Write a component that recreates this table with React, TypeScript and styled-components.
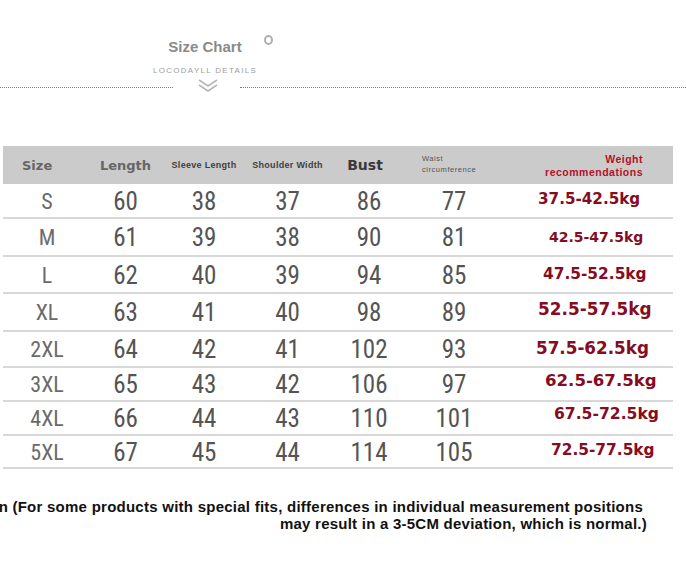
import React from "react";
import styled, { createGlobalStyle } from "styled-components";

const GlobalStyle = createGlobalStyle`
  html, body {
    margin: 0;
    padding: 0;
    background: #fff;
  }
`;

const Page = styled.div`
  position: relative;
  width: 686px;
  height: 580px;
  overflow: hidden;
  background: #fff;
  font-family: "Liberation Sans", Arial, sans-serif;
`;

const TitleBlock = styled.div`
  width: 410px;
  padding-top: 38px;
  display: flex;
  flex-direction: column;
  align-items: center;
`;

const Title = styled.div`
  position: relative;
  font-size: 15px;
  line-height: 18px;
  font-weight: 700;
  color: #8a8a8a;
`;

const Ring = styled.span`
  position: absolute;
  right: -31px;
  top: -3px;
  width: 5px;
  height: 6px;
  border: 2px solid #b0b0b0;
  border-radius: 50%;
`;

const Subtitle = styled.div`
  margin-top: 10px;
  font-size: 8px;
  line-height: 10px;
  letter-spacing: 1.3px;
  color: #9e9e9e;
`;

const Divider = styled.div`
  display: flex;
  align-items: flex-start;
  height: 14px;
  margin-top: 3px;
`;

const Dots = styled.div<{ $w: number }>`
  width: ${({ $w }) => $w}px;
  margin-top: 8px;
  border-top: 1px dotted #7a7a7a;
`;

const Chevron = styled.svg`
  margin: 0 21px 0 24px;
  flex-shrink: 0;
`;

const Table = styled.div`
  margin: 53px 0 0 3px;
  width: 670px;
`;

const HeadRow = styled.div`
  display: grid;
  grid-template-columns: 85px 75px 82px 85px 78px 92px 1fr;
  align-items: center;
  height: 38px;
  background: #cbcbcb;
`;

const HeadCell = styled.div<{ $align?: string; $pad?: string }>`
  text-align: ${({ $align }) => $align || "center"};
  padding: ${({ $pad }) => $pad || "0"};
  font-family: "DejaVu Sans", Verdana, sans-serif;
  font-weight: 700;
  font-size: 13px;
  color: #666;
  white-space: nowrap;
`;

const BustHead = styled(HeadCell)`
  font-size: 14px;
  color: #3a3a3a;
  padding-right: 8px;
`;

const SmallHead = styled.div`
  text-align: center;
  font-family: "Liberation Sans", Arial, sans-serif;
  font-weight: 700;
  font-size: 9px;
  letter-spacing: 0.3px;
  color: #3f3f3f;
  white-space: nowrap;
`;

const WaistHead = styled.div`
  padding-left: 14px;
  margin-top: -2px;
  font-family: "Liberation Sans", Arial, sans-serif;
  font-size: 7.5px;
  line-height: 11px;
  letter-spacing: 0.55px;
  color: #555;
`;

const WeightHead = styled.div`
  text-align: right;
  padding-right: 30px;
  margin-top: 2px;
  font-family: "Liberation Sans", Arial, sans-serif;
  font-weight: 700;
  font-size: 10.5px;
  line-height: 13px;
  letter-spacing: 0.5px;
  color: #b3112a;
`;

const Row = styled.div<{ $h: number }>`
  display: grid;
  grid-template-columns: 85px 75px 82px 85px 78px 92px 1fr;
  align-items: center;
  height: ${({ $h }) => $h}px;
  box-sizing: border-box;
  border-bottom: 2px solid #d8d8d8;
`;

const Num = styled.div`
  text-align: center;
  font-family: "Liberation Sans Narrow", "Roboto Condensed", "DejaVu Sans Condensed", sans-serif;
  font-size: 25px;
  line-height: 28px;
  color: #545454;
  padding-top: 2px;
`;

const SizeLabel = styled(Num)`
  font-size: 22px;
  color: #6a6a6a;
  padding-left: 3px;
`;

const Weight = styled.div<{ $x: number; $dy: number; $fs: number }>`
  padding-left: ${({ $x }) => $x - 500}px;
  transform: translateY(${({ $dy }) => $dy}px);
  font-family: "DejaVu Sans", Verdana, sans-serif;
  font-weight: 700;
  font-size: ${({ $fs }) => $fs}px;
  color: #860c22;
  white-space: nowrap;
`;

const Note = styled.div`
  margin-top: 29px;
  width: 647px;
  font-family: "Liberation Sans", Arial, sans-serif;
  font-weight: 700;
  font-size: 15px;
  line-height: 17px;
  color: #111;
`;

const NoteLine = styled.div<{ $ls: number; $pr?: number }>`
  white-space: nowrap;
  display: flex;
  justify-content: flex-end;
  letter-spacing: ${({ $ls }) => $ls}px;
  padding-right: ${({ $pr }) => $pr || 0}px;
`;

const rows = [
  { size: "S", len: 60, sleeve: 38, shoulder: 37, bust: 86, waist: 77, weight: "37.5-42.5kg", h: 35, x: 538, dy: -2, fs: 15.2 },
  { size: "M", len: 61, sleeve: 39, shoulder: 38, bust: 90, waist: 81, weight: "42.5-47.5kg", h: 38, x: 549, dy: 0, fs: 14 },
  { size: "L", len: 62, sleeve: 40, shoulder: 39, bust: 94, waist: 85, weight: "47.5-52.5kg", h: 37, x: 543, dy: -1, fs: 15.4 },
  { size: "XL", len: 63, sleeve: 41, shoulder: 40, bust: 98, waist: 89, weight: "52.5-57.5kg", h: 38, x: 538, dy: -3, fs: 16.9 },
  { size: "2XL", len: 64, sleeve: 42, shoulder: 41, bust: 102, waist: 93, weight: "57.5-62.5kg", h: 36, x: 536, dy: -1, fs: 16.8 },
  { size: "3XL", len: 65, sleeve: 43, shoulder: 42, bust: 106, waist: 97, weight: "62.5-67.5kg", h: 34, x: 545, dy: -4, fs: 16.6 },
  { size: "4XL", len: 66, sleeve: 44, shoulder: 43, bust: 110, waist: 101, weight: "67.5-72.5kg", h: 34, x: 554, dy: -4, fs: 15.6 },
  { size: "5XL", len: 67, sleeve: 45, shoulder: 44, bust: 114, waist: 105, weight: "72.5-77.5kg", h: 33, x: 551, dy: -2, fs: 15.4 },
];

export default function App() {
  return (
    <Page>
      <GlobalStyle />
      <TitleBlock>
        <Title>
          Size Chart
          <Ring />
        </Title>
        <Subtitle>LOCODAYLL DETAILS</Subtitle>
      </TitleBlock>
      <Divider>
        <Dots $w={173} />
        <Chevron width="22" height="14" viewBox="0 0 22 14">
          <polyline points="2,1 11,7 20,1" fill="none" stroke="#b5b5b5" strokeWidth="1.6" />
          <polyline points="2,6 11,12 20,6" fill="none" stroke="#b5b5b5" strokeWidth="1.6" />
        </Chevron>
        <Dots $w={446} />
      </Divider>

      <Table>
        <HeadRow>
          <HeadCell $align="left" $pad="0 0 0 19px">Size</HeadCell>
          <HeadCell>Length</HeadCell>
          <SmallHead>Sleeve Length</SmallHead>
          <SmallHead>Shoulder Width</SmallHead>
          <BustHead>Bust</BustHead>
          <WaistHead>
            Waist
            <br />
            circumference
          </WaistHead>
          <WeightHead>
            Weight
            <br />
            recommendations
          </WeightHead>
        </HeadRow>
        {rows.map((r) => (
          <Row key={r.size} $h={r.h}>
            <SizeLabel>{r.size}</SizeLabel>
            <Num>{r.len}</Num>
            <Num>{r.sleeve}</Num>
            <Num>{r.shoulder}</Num>
            <Num>{r.bust}</Num>
            <Num>{r.waist}</Num>
            <Weight $x={r.x} $dy={r.dy} $fs={r.fs}>
              {r.weight}
            </Weight>
          </Row>
        ))}
      </Table>

      <Note>
        <NoteLine $ls={0.25} $pr={4}>
          n (For some products with special fits, differences in individual measurement positions
        </NoteLine>
        <NoteLine $ls={0.24}>may result in a 3-5CM deviation, which is normal.)</NoteLine>
      </Note>
    </Page>
  );
}
